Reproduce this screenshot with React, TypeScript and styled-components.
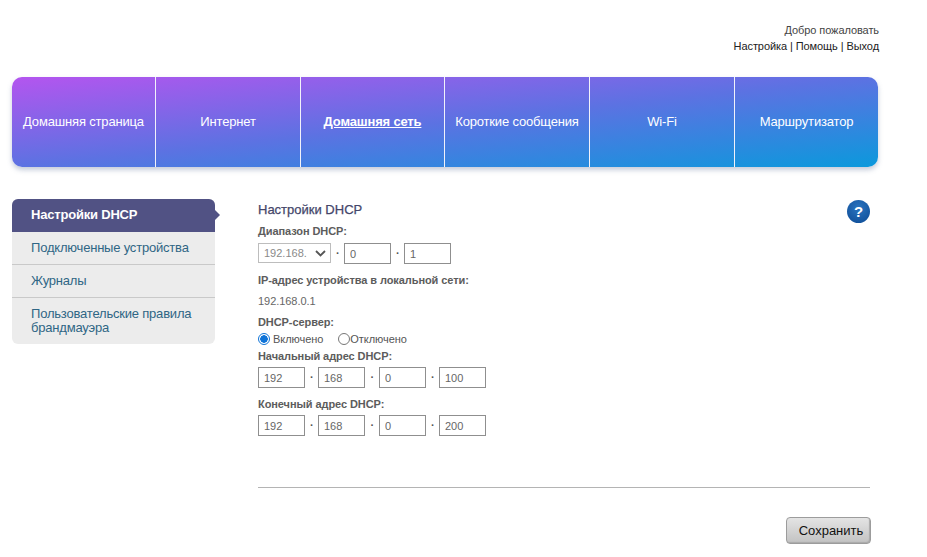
import React from "react";
import styled, { createGlobalStyle } from "styled-components";

const Global = createGlobalStyle`
  html, body { margin: 0; padding: 0; background: #fff; }
  body { font-family: "Liberation Sans", Arial, sans-serif; overflow: hidden; }
`;

const Page = styled.div`
  width: 927px;
  height: 557px;
  overflow: hidden;
  padding: 0 0 0 12px;
  box-sizing: border-box;
`;

const TopLinks = styled.div`
  width: 867px;
  height: 77px;
  padding-top: 22px;
  box-sizing: border-box;
  text-align: right;
  font-size: 11px;
  line-height: 16px;
  letter-spacing: -0.08px;
  color: #444;
`;

const LinkLine = styled.div`
  color: #222;
`;

const Nav = styled.nav`
  display: flex;
  width: 866px;
  height: 90px;
  border-radius: 10px;
  background: linear-gradient(to bottom right, #b455ef 0%, #5c72e2 50%, #0b99dc 100%);
  box-shadow: 0 3px 5px rgba(90, 110, 150, 0.35);
  overflow: hidden;
`;

const NavItem = styled.a<{ $active?: boolean; $w: number }>`
  flex: 0 0 ${(p) => p.$w}px;
  display: flex;
  align-items: center;
  justify-content: center;
  box-sizing: border-box;
  padding-bottom: 2px;
  color: #fff;
  font-size: 13px;
  letter-spacing: -0.17px;
  font-weight: ${(p) => (p.$active ? 700 : 400)};
  text-decoration: ${(p) => (p.$active ? "underline" : "none")};
  border-right: 1px solid #f2f2fa;
  white-space: nowrap;
  &:last-child { border-right: 0; }
`;

const Body = styled.div`
  display: flex;
  margin-top: 32px;
`;

const Sidebar = styled.ul`
  list-style: none;
  margin: 0;
  padding: 0;
  width: 203px;
  flex: none;
  height: 145px;
  background: #ececec;
  border-radius: 6px;
`;

const SideItem = styled.li<{ $active?: boolean }>`
  position: relative;
  box-sizing: border-box;
  padding: 9px 8px 8px 19px;
  font-size: 13px;
  line-height: 14px;
  letter-spacing: -0.2px;
  min-height: 33px;
  color: ${(p) => (p.$active ? "#fff" : "#2f6685")};
  font-weight: ${(p) => (p.$active ? 700 : 400)};
  background: ${(p) => (p.$active ? "#515284" : "transparent")};
  border-radius: ${(p) => (p.$active ? "6px 6px 0 0" : "0")};
  border-bottom: ${(p) => (p.$active ? "0" : "1px solid #c9c9c9")};
  &:last-child { border-bottom: 0; }
  ${(p) =>
    p.$active &&
    `&::after {
      content: "";
      position: absolute;
      right: -5px;
      top: 11px;
      border-left: 5px solid #515284;
      border-top: 5px solid transparent;
      border-bottom: 5px solid transparent;
    }`}
`;

const Main = styled.main`
  position: relative;
  margin-left: 43px;
  width: 612px;
`;

const Title = styled.h1`
  margin: 3px 0 0;
  font-size: 13px;
  line-height: 15px;
  font-weight: 400;
  color: #44466a;
  -webkit-text-stroke: 0.25px #44466a;
`;

const Help = styled.div`
  position: absolute;
  right: 0;
  top: 1px;
  width: 23px;
  height: 23px;
  border-radius: 50%;
  background: radial-gradient(circle at 50% 35%, #2a75c0, #0d4a94);
  color: #fff;
  font-size: 15px;
  font-weight: 700;
  line-height: 23px;
  text-align: center;
`;

const Label = styled.div<{ $top?: number }>`
  margin-top: ${(p) => p.$top ?? 0}px;
  font-size: 11px;
  line-height: 13px;
  font-weight: 700;
  letter-spacing: -0.08px;
  color: #5c5c5c;
`;

const FieldRow = styled.div<{ $top?: number }>`
  display: flex;
  align-items: flex-start;
  margin-top: ${(p) => p.$top ?? 0}px;
`;

const Dot = styled.span<{ $w?: number }>`
  flex: 0 0 ${(p) => p.$w ?? 13}px;
  text-align: center;
  font-size: 11px;
  line-height: 14px;
  font-weight: 700;
  color: #555;
`;

const Field = styled.input`
  width: 47px;
  height: 21px;
  box-sizing: border-box;
  border: 1px solid #8f8f8f;
  border-radius: 0;
  padding: 0 4px 0 5px;
  margin: 0;
  font-family: inherit;
  font-size: 11px;
  color: #666;
  background: #fff;
  outline: none;
  will-change: opacity;
`;

const SelectBox = styled.div`
  width: 73px;
  height: 20px;
  box-sizing: border-box;
  border: 1px solid #bdbdbd;
  display: flex;
  align-items: center;
  justify-content: space-between;
  padding: 0 4px 0 5px;
  font-size: 11px;
  color: #8a8a8a;
  background: #fff;
`;

const Value = styled.div`
  margin-top: 8px;
  font-size: 11px;
  line-height: 13px;
  letter-spacing: -0.05px;
  color: #666;
`;

const Radios = styled.div`
  display: flex;
  align-items: center;
  height: 14px;
  margin-top: 3px;
  font-size: 11px;
  letter-spacing: -0.05px;
  color: #555;
`;

const Radio = styled.span<{ $on?: boolean; $left?: number }>`
  width: 12px;
  height: 12px;
  box-sizing: border-box;
  border-radius: 50%;
  margin-left: ${(p) => p.$left ?? 0}px;
  margin-right: ${(p) => (p.$on ? 3 : 0)}px;
  border: 1px solid ${(p) => (p.$on ? "#0f74d8" : "#777")};
  background: ${(p) => (p.$on ? "radial-gradient(circle, #0f74d8 0 3.5px, #fff 4px)" : "#fff")};
`;

const Rule = styled.hr`
  margin: 51px 0 0;
  border: 0;
  border-top: 1px solid #b4b4b4;
`;

const Actions = styled.div`
  display: flex;
  justify-content: flex-end;
  margin: 29px -1px 0 0;
`;

const SaveButton = styled.button`
  width: 85px;
  height: 27px;
  border: 1px solid #9c9c9c;
  border-radius: 4px;
  background: linear-gradient(#e4e4e4, #c2c2c2);
  box-shadow: inset -1px -1px 1px #aaa;
  font-family: inherit;
  font-size: 13px;
  color: #111;
  padding: 0 0 0 5px;
`;

const navItems = [
  ["Домашняя страница", 144],
  ["Интернет", 145],
  ["Домашняя сеть", 144],
  ["Короткие сообщения", 145],
  ["Wi-Fi", 145],
  ["Маршрутизатор", 143],
] as const;

function IpRow({ values, top }: { values: string[]; top?: number }) {
  return (
    <FieldRow $top={top}>
      {values.map((v, i) => (
        <React.Fragment key={i}>
          {i > 0 && <Dot $w={i === 2 ? 14 : 13}>.</Dot>}
          <Field defaultValue={v} />
        </React.Fragment>
      ))}
    </FieldRow>
  );
}

export default function App() {
  return (
    <Page>
      <Global />
      <TopLinks>
        <div>Добро пожаловать</div>
        <LinkLine>Настройка | Помощь | Выход</LinkLine>
      </TopLinks>
      <Nav>
        {navItems.map(([t, w]) => (
          <NavItem key={t} $w={w} $active={t === "Домашняя сеть"}>
            {t}
          </NavItem>
        ))}
      </Nav>
      <Body>
        <Sidebar>
          <SideItem $active>Настройки DHCP</SideItem>
          <SideItem>Подключенные устройства</SideItem>
          <SideItem>Журналы</SideItem>
          <SideItem>Пользовательские правила брандмауэра</SideItem>
        </Sidebar>
        <Main>
          <Title>Настройки DHCP</Title>
          <Help>?</Help>
          <Label $top={8}>Диапазон DHCP:</Label>
          <FieldRow $top={5}>
            <SelectBox>
              <span>192.168.</span>
              <svg width="11" height="7" viewBox="0 0 11 7">
                <path d="M1 1l4.5 4.5L10 1" fill="none" stroke="#555" strokeWidth="1.8" />
              </svg>
            </SelectBox>
            <Dot>.</Dot>
            <Field defaultValue="0" />
            <Dot>.</Dot>
            <Field defaultValue="1" />
          </FieldRow>
          <Label $top={10}>IP-адрес устройства в локальной сети:</Label>
          <Value>192.168.0.1</Value>
          <Label $top={8}>DHCP-сервер:</Label>
          <Radios>
            <Radio $on />
            Включено
            <Radio $left={15} />
            Отключено
          </Radios>
          <Label $top={4}>Начальный адрес DHCP:</Label>
          <IpRow values={["192", "168", "0", "100"]} top={4} />
          <Label $top={10}>Конечный адрес DHCP:</Label>
          <IpRow values={["192", "168", "0", "200"]} top={4} />
          <Rule />
          <Actions>
            <SaveButton>Сохранить</SaveButton>
          </Actions>
        </Main>
      </Body>
    </Page>
  );
}
